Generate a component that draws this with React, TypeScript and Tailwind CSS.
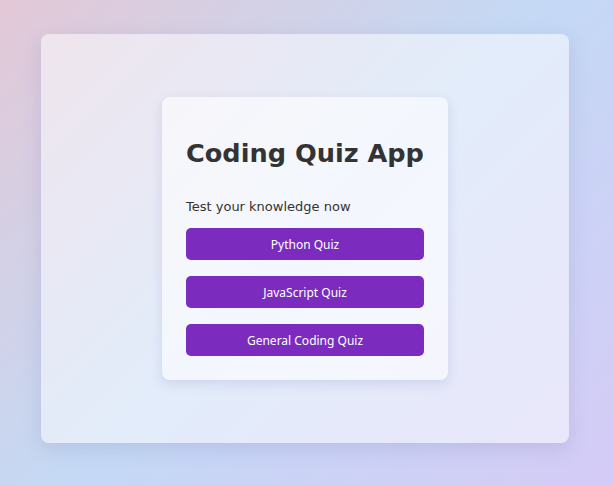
import { ReactNode } from "react";

type QuizButtonProps = { children: ReactNode };

function QuizButton({ children }: QuizButtonProps) {
  return (
    <button
      type="button"
      className="h-8 w-full rounded-[5px] bg-[#7b2cbf] pt-[2px] font-['Noto_Sans',sans-serif] text-[12px] text-white"
    >
      {children}
    </button>
  );
}

export default function App() {
  const quizzes = ["Python Quiz", "JavaScript Quiz", "General Coding Quiz"];

  return (
    <div className="min-h-screen w-full overflow-hidden bg-[linear-gradient(135deg,#e3c8d7_0%,#c4d9f5_50%,#d5cbf6_100%)] pt-[34px] pl-[41px] font-['DejaVu_Sans',sans-serif]">
      {/* outer panel */}
      <div className="flex h-[409px] w-[528px] items-center justify-center rounded-lg bg-white/50 shadow-[0_6px_20px_rgba(80,80,140,0.15)]">
        {/* quiz card */}
        <div className="w-[286px] rounded-lg bg-white/60 px-6 pt-6 pb-6 shadow-[0_4px_12px_rgba(80,90,150,0.15)]">
          <h1 className="mt-[17px] mb-[31px] text-[25.6px] leading-[30px] font-bold text-[#333]">
            Coding Quiz App
          </h1>
          <p className="text-[13px] leading-4 text-[#333]">Test your knowledge now</p>
          <div className="mt-[13px] flex flex-col gap-4">
            {quizzes.map((q) => (
              <QuizButton key={q}>{q}</QuizButton>
            ))}
          </div>
        </div>
      </div>
    </div>
  );
}
